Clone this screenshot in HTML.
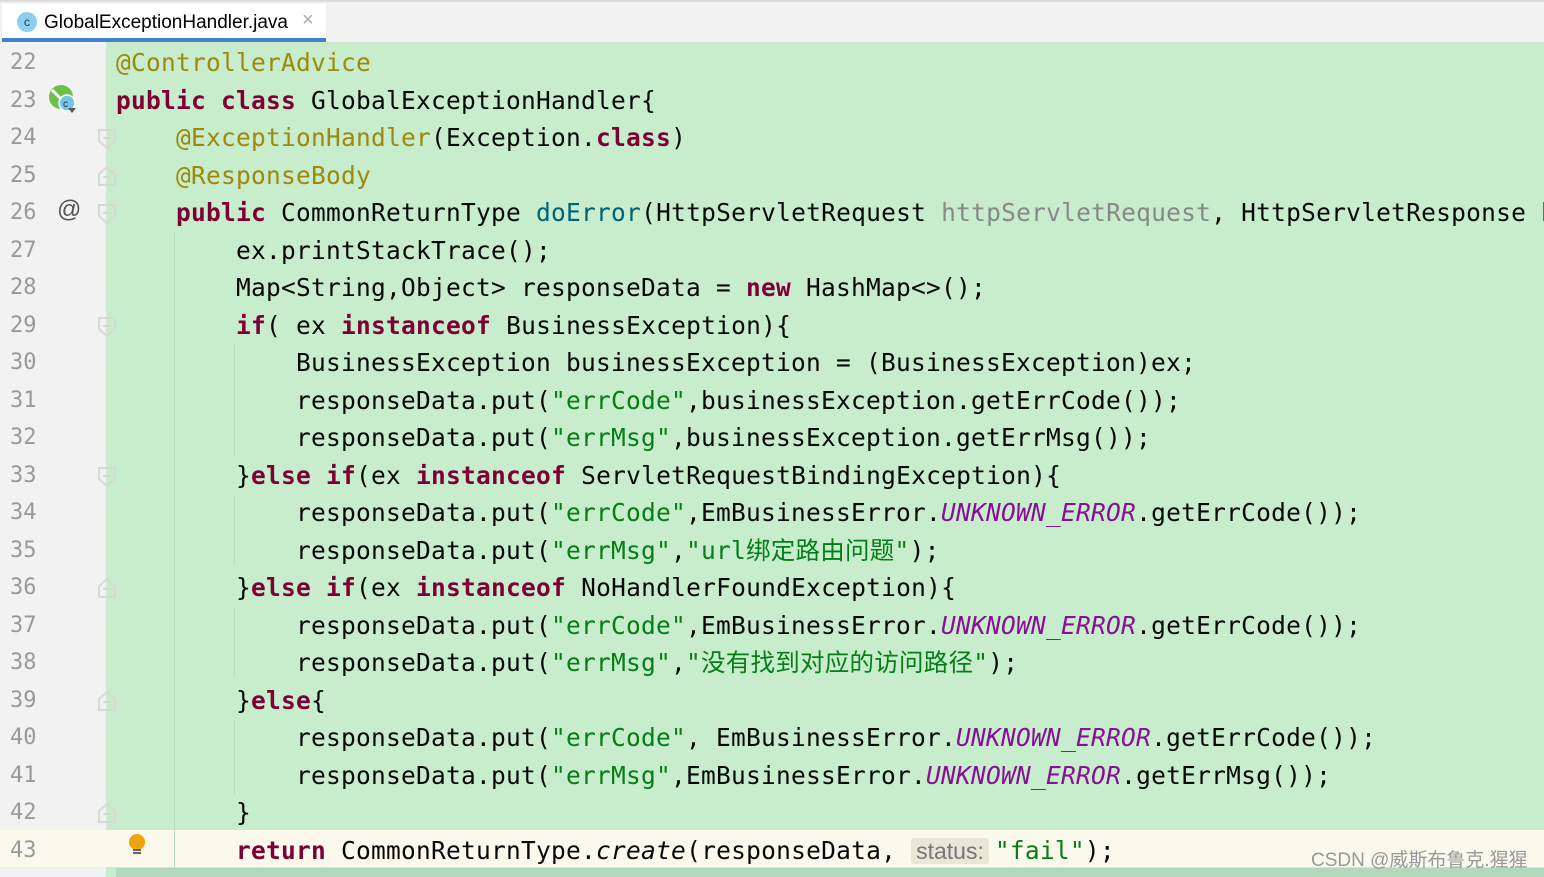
<!DOCTYPE html>
<html><head><meta charset="utf-8"><style>
html,body{margin:0;padding:0;width:1544px;height:877px;overflow:hidden;background:#c7edcc;}
.tabbar{position:absolute;left:0;top:0;width:1544px;height:42px;background:#f2f2f2;border-top:2px solid #ddd;box-sizing:border-box;}
.tab{position:absolute;left:2px;top:2px;width:324px;height:38px;background:#fff;border-bottom:4px solid #4083c9;box-sizing:border-box;font-family:"Liberation Sans",sans-serif;font-size:19px;color:#000;}
.tab .ic{position:absolute;left:15px;top:8px;width:20px;height:20px;border-radius:50%;background:#8dd0ee;font-size:12px;text-align:center;line-height:20px;color:#234;}
.tab .t{position:absolute;left:42px;top:8px;}
.tab .x{position:absolute;left:300px;top:5px;color:#aaa;font-size:20px;}
.gutter{position:absolute;left:0;top:42px;width:106px;height:835px;background:#f2f2f2;}
.hl{position:absolute;left:0;top:830px;width:1544px;height:37px;background:#fbf9ec;}
.bot{position:absolute;left:116px;top:868px;width:1428px;height:9px;background:#b4d8bb;}
.ln{position:absolute;left:10px;width:40px;font-family:"DejaVu Sans Mono","Liberation Mono",monospace;font-size:22px;color:#999;line-height:37.5px;}
.code{position:absolute;left:116px;font-family:"DejaVu Sans Mono","Liberation Mono","Noto Sans CJK SC",monospace;font-size:24.5px;line-height:37.5px;white-space:pre;color:#080808;letter-spacing:0.25px;}
.k{color:#7c0033;font-weight:bold}
.a{color:#9e880d}
.s{color:#067d17}
.m{color:#00627a}
.p{color:#888}
.c{color:#871094;font-style:italic}
.hint{background:#e9e7d6;color:#777;font-family:"Liberation Sans",sans-serif;font-size:23px;letter-spacing:0;border-radius:3px;padding:0 5px;margin-right:6px}
.g{position:absolute;width:1px;background:#b9dcbf;}
.fold{position:absolute;left:98px;}
.wm{position:absolute;left:1311px;top:845px;font-family:"Liberation Sans","Noto Sans CJK SC",sans-serif;font-size:19px;color:#999;}
</style></head><body>
<div class="tabbar"><div class="tab"><span class="ic">c</span><span class="t">GlobalExceptionHandler.java</span><span class="x">×</span></div></div>
<div class="gutter"></div>
<div class="hl"></div>
<div class="bot"></div>
<div class="g" style="left:174px;top:232px;height:635px"></div>
<div class="g" style="left:234px;top:345px;height:110px"></div>
<div class="g" style="left:234px;top:495px;height:70px"></div>
<div class="g" style="left:234px;top:607px;height:70px"></div>
<div class="g" style="left:234px;top:720px;height:75px"></div>
<svg class="fold" style="top:129px" width="18" height="20"><path d="M1 1H17V12L9 19L1 12Z" fill="none" stroke="#d6d9d6" stroke-width="2"/><path d="M5 9H13" stroke="#d6d9d6" stroke-width="2"/></svg>
<svg class="fold" style="top:166px" width="18" height="20"><path d="M1 19H17V8L9 1L1 8Z" fill="none" stroke="#d6d9d6" stroke-width="2"/><path d="M5 11H13" stroke="#d6d9d6" stroke-width="2"/></svg>
<svg class="fold" style="top:204px" width="18" height="20"><path d="M1 1H17V12L9 19L1 12Z" fill="none" stroke="#d6d9d6" stroke-width="2"/><path d="M5 9H13" stroke="#d6d9d6" stroke-width="2"/></svg>
<svg class="fold" style="top:317px" width="18" height="20"><path d="M1 1H17V12L9 19L1 12Z" fill="none" stroke="#d6d9d6" stroke-width="2"/><path d="M5 9H13" stroke="#d6d9d6" stroke-width="2"/></svg>
<svg class="fold" style="top:467px" width="18" height="20"><path d="M1 1H17V12L9 19L1 12Z" fill="none" stroke="#d6d9d6" stroke-width="2"/><path d="M5 9H13" stroke="#d6d9d6" stroke-width="2"/></svg>
<svg class="fold" style="top:578px" width="18" height="20"><path d="M1 19H17V8L9 1L1 8Z" fill="none" stroke="#d6d9d6" stroke-width="2"/><path d="M5 11H13" stroke="#d6d9d6" stroke-width="2"/></svg>
<svg class="fold" style="top:691px" width="18" height="20"><path d="M1 19H17V8L9 1L1 8Z" fill="none" stroke="#d6d9d6" stroke-width="2"/><path d="M5 11H13" stroke="#d6d9d6" stroke-width="2"/></svg>
<svg class="fold" style="top:803px" width="18" height="20"><path d="M1 19H17V8L9 1L1 8Z" fill="none" stroke="#d6d9d6" stroke-width="2"/><path d="M5 11H13" stroke="#d6d9d6" stroke-width="2"/></svg>
<svg style="position:absolute;left:48px;top:84px" width="32" height="30"><circle cx="13" cy="13" r="12" fill="#6cbf4b"/><path d="M4 6 L20 22" stroke="#fff" stroke-width="3"/><circle cx="19" cy="19" r="8" fill="#72c6e8" stroke="#fff" stroke-width="1.5"/><text x="15" y="23" font-size="10" fill="#234" font-family="Liberation Sans">c</text><path d="M20 24 L28 24 L24 29Z" fill="#555"/></svg>
<div style="position:absolute;left:57px;top:196px;font-family:'Liberation Sans',sans-serif;font-size:24px;color:#555;">@</div>
<svg style="position:absolute;left:128px;top:833px" width="20" height="24"><circle cx="9" cy="9" r="8" fill="#f0a30a"/><rect x="5" y="16" width="8" height="2" fill="#666"/><rect x="5" y="19" width="8" height="2" fill="#666"/></svg>
<div class="ln" style="top:44px">22<br>23<br>24<br>25<br>26<br>27<br>28<br>29<br>30<br>31<br>32<br>33<br>34<br>35<br>36<br>37<br>38<br>39<br>40<br>41<br>42<br>43</div>
<div class="code" style="top:44px"><span class="a">@ControllerAdvice</span>
<span class="k">public class</span> GlobalExceptionHandler{
    <span class="a">@ExceptionHandler</span>(Exception.<span class="k">class</span>)
    <span class="a">@ResponseBody</span>
    <span class="k">public</span> CommonReturnType <span class="m">doError</span>(HttpServletRequest <span class="p">httpServletRequest</span>, HttpServletResponse h
        ex.printStackTrace();
        Map&lt;String,Object&gt; responseData = <span class="k">new</span> HashMap&lt;&gt;();
        <span class="k">if</span>( ex <span class="k">instanceof</span> BusinessException){
            BusinessException businessException = (BusinessException)ex;
            responseData.put(<span class="s">"errCode"</span>,businessException.getErrCode());
            responseData.put(<span class="s">"errMsg"</span>,businessException.getErrMsg());
        }<span class="k">else if</span>(ex <span class="k">instanceof</span> ServletRequestBindingException){
            responseData.put(<span class="s">"errCode"</span>,EmBusinessError.<span class="c">UNKNOWN_ERROR</span>.getErrCode());
            responseData.put(<span class="s">"errMsg"</span>,<span class="s">"url绑定路由问题"</span>);
        }<span class="k">else if</span>(ex <span class="k">instanceof</span> NoHandlerFoundException){
            responseData.put(<span class="s">"errCode"</span>,EmBusinessError.<span class="c">UNKNOWN_ERROR</span>.getErrCode());
            responseData.put(<span class="s">"errMsg"</span>,<span class="s">"没有找到对应的访问路径"</span>);
        }<span class="k">else</span>{
            responseData.put(<span class="s">"errCode"</span>, EmBusinessError.<span class="c">UNKNOWN_ERROR</span>.getErrCode());
            responseData.put(<span class="s">"errMsg"</span>,EmBusinessError.<span class="c">UNKNOWN_ERROR</span>.getErrMsg());
        }
        <span class="k">return</span> CommonReturnType.<i>create</i>(responseData, <span class="hint">status:</span><span class="s">"fail"</span>);</div>
<div class="wm">CSDN @威斯布鲁克.猩猩</div>
</body></html>
